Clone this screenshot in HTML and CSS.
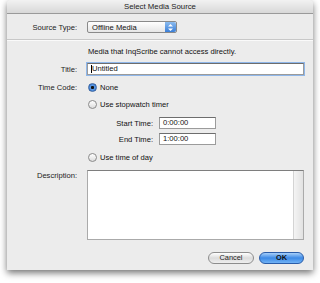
FILE: index.html
```html
<!DOCTYPE html>
<html lang="en">
  <head>
    <title>Select Media Source</title>
    <link rel="stylesheet" href="styles.css">
  </head>
  <body>
    <div class="window">
      <div class="titlebar">Select Media Source</div>
      <div class="top">
        <div class="row source">
          <span class="label">Source Type:</span>
          <div class="popup">
            <span>Offline Media</span>
            <span class="arrows">
              <svg width="7" height="9" viewBox="0 0 7 9"><path d="M1 3.5 L3.5 1 L6 3.5 Z M1 5.5 L3.5 8 L6 5.5 Z" fill="#fff"/></svg>
            </span>
          </div>
        </div>
      </div>
      <div class="body">
        <div class="row msg"><span class="label"></span><span>Media that InqScribe cannot access directly.</span></div>
        <div class="row title">
          <span class="label">Title:</span>
          <div class="field wide"><span class="caret"></span>Untitled</div>
        </div>
        <div class="row tc">
          <span class="label">Time Code:</span>
          <span class="radio on"></span><span>None</span>
        </div>
        <div class="row sw">
          <span class="label"></span>
          <span class="radio"></span><span>Use stopwatch timer</span>
        </div>
        <div class="row time start">
          <span class="sublabel">Start Time:</span>
          <div class="field small">0:00:00</div>
        </div>
        <div class="row time end">
          <span class="sublabel">End Time:</span>
          <div class="field small">1:00:00</div>
        </div>
        <div class="row tod">
          <span class="label"></span>
          <span class="radio"></span><span>Use time of day</span>
        </div>
        <div class="row desc">
          <span class="label">Description:</span>
          <div class="textarea"><div class="scroll"></div></div>
        </div>
        <div class="buttons">
          <div class="btn cancel">Cancel</div>
          <div class="btn ok">OK</div>
        </div>
      </div>
    </div>
  </body>
</html>
```

FILE: styles.css
```css
body { margin: 0; background: #fff; font-family: "Liberation Sans", Arial, sans-serif; font-size: 7.6px; color: #111; width: 320px; height: 283px; overflow: hidden; }
.window { margin-left: 7px; width: 306px; height: 270px; background: #ececec; box-shadow: 0 3px 7px rgba(0,0,0,0.55); border-radius: 4px 4px 0 0; display: flex; flex-direction: column; }
.titlebar { height: 13px; line-height: 13px; text-align: center; font-size: 7.8px; color: #222; background: linear-gradient(#f2f2f2, #d8d8d8); border-bottom: 1px solid #9a9a9a; border-radius: 4px 4px 0 0; }
.top { height: 25px; border-bottom: 1px solid #c8c8c8; box-shadow: 0 1px 0 #fafafa; }
.row { display: flex; align-items: center; }
.label { width: 70px; text-align: right; flex: none; margin-right: 10px; color: #222; }
.source { padding-top: 7px; }
.popup { width: 84px; height: 10px; border: 1px solid #8a8a8a; border-radius: 2px; background: linear-gradient(#fff, #e6e6e6); display: flex; align-items: center; justify-content: space-between; padding-left: 4px; margin-left: 0; }
.arrows { width: 11px; height: 10px; background: linear-gradient(#8cbcf0, #3a7fd8); border-radius: 0 2px 2px 0; display: flex; align-items: center; justify-content: center; }
.msg { height: 23px; }
.msg span:last-child { margin-left: 1px; }
.field { height: 10px; border: 1px solid #9b9b9b; border-top-color: #6d6d6d; background: #fff; line-height: 10px; padding-left: 3px; display: flex; align-items: center; }
.field.wide { width: 212px; box-shadow: 0 0 0 1px #8fb7ea; }
.caret { width: 1px; height: 8px; background: #000; }
.field.small { width: 52px; }
.title { height: 12px; }
.tc { height: 14px; margin-top: 5px; }
.sw { height: 14px; margin-top: 3px; }
.radio { width: 7px; height: 7px; border-radius: 50%; border: 1px solid #8a8a8a; background: linear-gradient(#fff, #ddd); margin-left: 1px; margin-right: 3px; flex: none; }
.radio.on { background: radial-gradient(circle, #111 0 1.3px, #5d9be6 1.8px, #2f6fc9 100%); border-color: #3a64a0; }
.time { height: 12px; margin-top: 6px; }
.time.end { margin-top: 4px; }
.sublabel { width: 146px; text-align: right; margin-right: 6px; flex: none; }
.tod { height: 14px; margin-top: 5px; }
.desc { align-items: flex-start; margin-top: 6px; }
.desc .label { margin-top: 1px; }
.textarea { width: 215px; height: 68px; border: 1px solid #aaa; border-top-color: #7e7e7e; background: #fff; display: flex; justify-content: flex-end; }
.scroll { width: 9px; border-left: 1px solid #d4d4d4; background: linear-gradient(90deg, #f4f4f4, #e2e2e2); }
.buttons { display: flex; justify-content: flex-end; gap: 5px; padding-right: 9px; margin-top: 12px; }
.btn { height: 10px; line-height: 10px; border-radius: 6px; text-align: center; font-size: 7.4px; }
.cancel { width: 44px; border: 1px solid #8d8d8d; background: linear-gradient(#fff, #dcdcdc 50%, #eee); color: #222; }
.ok { width: 43px; border: 1px solid #2a5ca8; background: linear-gradient(#a8d0fa, #3d8ae6 50%, #70b2f5); font-weight: bold; color: #111; }
```
